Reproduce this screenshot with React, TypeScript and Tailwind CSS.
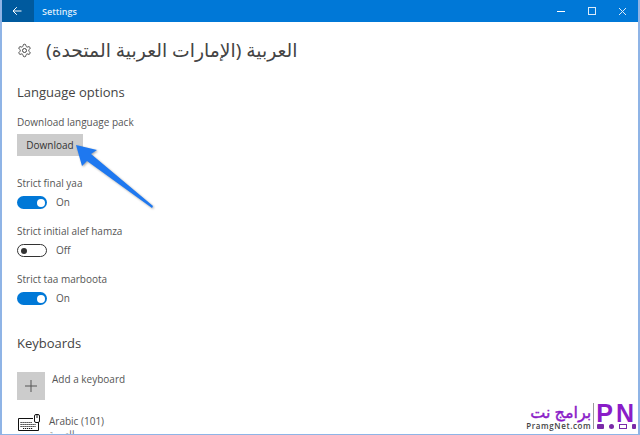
import React from "react";

const font = { fontFamily: '"Open Sans", "Noto Sans", sans-serif' };

function Toggle({ on }: { on: boolean }) {
  return (
    <div className="flex items-center h-[13px] gap-[9px]">
      {on ? (
        <div className="w-[30px] h-[13px] rounded-full bg-[#0078d7] flex items-center justify-end pr-[2px]">
          <div className="w-[8px] h-[8px] rounded-full bg-white" />
        </div>
      ) : (
        <div className="w-[30px] h-[13px] rounded-full border-[1.5px] border-[#333] bg-white flex items-center pl-[3px]">
          <div className="w-[6px] h-[6px] rounded-full bg-[#333]" />
        </div>
      )}
      <span className="text-[10px] leading-[13px] text-[#555]">{on ? "On" : "Off"}</span>
    </div>
  );
}

function Setting({ label, on, className }: { label: string; on: boolean; className: string }) {
  return (
    <div className={className}>
      <div className="text-[10px] leading-[14px] text-[#555] h-[14px]">{label}</div>
      <div className="mt-[6px]">
        <Toggle on={on} />
      </div>
    </div>
  );
}

function Gear() {
  return (
    <svg width="15" height="15" viewBox="0 0 24 24" fill="none" stroke="#444" strokeWidth="1.6" strokeLinejoin="round">
      <path d="M12.2 2h-.4a2 2 0 0 0-2 2v.2a2 2 0 0 1-1 1.7l-.4.3a2 2 0 0 1-2 0l-.2-.1a2 2 0 0 0-2.7.7l-.2.4a2 2 0 0 0 .7 2.7l.2.1a2 2 0 0 1 1 1.7v.5a2 2 0 0 1-1 1.8l-.2.1a2 2 0 0 0-.7 2.7l.2.4a2 2 0 0 0 2.7.7l.2-.1a2 2 0 0 1 2 0l.4.3a2 2 0 0 1 1 1.7v.2a2 2 0 0 0 2 2h.4a2 2 0 0 0 2-2v-.2a2 2 0 0 1 1-1.7l.4-.3a2 2 0 0 1 2 0l.2.1a2 2 0 0 0 2.7-.7l.2-.4a2 2 0 0 0-.7-2.7l-.2-.1a2 2 0 0 1-1-1.8v-.5a2 2 0 0 1 1-1.7l.2-.1a2 2 0 0 0 .7-2.7l-.2-.4a2 2 0 0 0-2.7-.7l-.2.1a2 2 0 0 1-2 0l-.4-.3a2 2 0 0 1-1-1.7V4a2 2 0 0 0-2-2z" />
      <circle cx="12" cy="12" r="3.2" />
    </svg>
  );
}

function KeyboardIcon() {
  return (
    <svg width="23" height="17" viewBox="0 0 23 17" fill="none" stroke="#111" strokeWidth="1">
      <path d="M15 4.5H.5v12h20V8" />
      <rect x="16.5" y="0.5" width="5" height="8" rx="1.5" fill="#fff" />
      <path d="M19 1v3" />
      <path d="M2.5 8.5h12M2.5 10.5h15M2.5 12.5h15M5 14.5h10" strokeDasharray="1.2 0.8" />
    </svg>
  );
}

export default function App() {
  return (
    <div
      style={font}
      className="relative w-[640px] h-[435px] overflow-hidden bg-white border-l-2 border-r-2 border-[#8fb4e6]"
    >
      <div className="flex items-center h-[22px] -mx-[2px] bg-[#0078d7] text-white">
        <div className="w-[34px] h-[22px] bg-[#005a9e] flex items-center justify-center">
          <svg width="10" height="10" viewBox="0 0 10 10" fill="none" stroke="#fff" strokeWidth="1">
            <path d="M9.5 5H1M4.8 1.2 1 5l3.8 3.8" />
          </svg>
        </div>
        <span className="ml-[8px] text-[9px] leading-none font-semibold text-[#dcebf9]">Settings</span>
        <div className="ml-auto flex items-center h-[22px] pr-[2px]">
          <div className="w-[31px] flex justify-center">
            <div className="w-[8px] h-px bg-white" />
          </div>
          <div className="w-[31px] flex justify-center">
            <div className="w-[8px] h-[8px] border border-[#dcebf9]" />
          </div>
          <div className="w-[31px] flex justify-center">
            <svg width="9" height="9" viewBox="0 0 9 9" stroke="#dcebf9" strokeWidth="1">
              <path d="M1 1l7 7M8 1 1 8" />
            </svg>
          </div>
        </div>
      </div>

      <div className="pl-[15px] flex flex-col">
        <div className="flex items-center mt-[20px] h-[17px]">
          <Gear />
          <div
            dir="rtl"
            className="ml-[14px] text-[18.8px] leading-[17px] text-[#444]"
            style={{ fontFamily: '"Noto Sans", "DejaVu Sans", sans-serif' }}
          >
            العربية (الإمارات العربية المتحدة)
          </div>
        </div>

        <div className="mt-[24px] text-[13px] leading-[18px] text-[#444]">Language options</div>
        <div className="mt-[14px] text-[10px] leading-[14px] text-[#555]">Download language pack</div>
        <div className="mt-[5px] w-[66px] h-[22px] bg-[#cccccc] flex items-center justify-center text-[10px] text-[#333]">
          Download
        </div>

        <Setting label="Strict final yaa" on className="mt-[20px]" />
        <Setting label="Strict initial alef hamza" on={false} className="mt-[15px]" />
        <Setting label="Strict taa marboota" on className="mt-[15px]" />

        <div className="mt-[29px] text-[13px] leading-[18px] text-[#444]">Keyboards</div>
        <div className="mt-[20px] flex items-start">
          <div className="w-[28px] h-[28px] bg-[#cccccc] flex items-center justify-center">
            <svg width="12" height="12" viewBox="0 0 12 12" stroke="#555" strokeWidth="1">
              <path d="M6 0v12M0 6h12" />
            </svg>
          </div>
          <span className="ml-[7px] text-[10px] leading-[14px] text-[#555]">Add a keyboard</span>
        </div>
        <div className="mt-[14px] flex items-start">
          <div className="ml-px">
            <KeyboardIcon />
          </div>
          <div className="ml-[8px]">
            <div className="text-[10px] leading-[14px] text-[#555]">Arabic (101)</div>
            <div dir="rtl" className="mt-px text-[9px] leading-[10px] text-[#666] text-left">العربية</div>
          </div>
        </div>
      </div>

      <svg className="absolute left-[-2px] top-0 drop-shadow-[1px_1px_1px_rgba(0,0,0,0.35)]" width="170" height="220" viewBox="0 0 170 220">
        <path d="M76 145 97 150 91 154 153 206 152 208 87 161 82 166Z" fill="#1e78f0" />
      </svg>

      <div className="absolute right-[1px] bottom-[5px] flex items-center gap-[2px] bg-white pl-[2px]">
        <div className="flex flex-col items-end">
          <div
            dir="rtl"
            className="text-[16px] leading-[20px] text-[#8a1cc8] [-webkit-text-stroke:0.4px_#8a1cc8]"
            style={{ fontFamily: '"Noto Sans", "DejaVu Sans", sans-serif' }}
          >
            برامج نت
          </div>
          <div className="text-[8px] leading-[8px] tracking-[0.6px] font-semibold text-[#444]">PramgNet.com</div>
        </div>
        <div className="w-px h-[26px] bg-[#999]" />
        <div className="flex flex-col items-center">
          <div
            className="flex text-[25px] leading-[19px] font-bold tracking-[3px] text-[#8a1cc8]"
            style={{ fontFamily: '"Liberation Sans", sans-serif' }}
          >
            <span>P</span>
            <span>N</span>
          </div>
          <div className="mt-[1px] flex gap-[5px]">
            <div className="w-[7px] h-[5px] bg-[#7a2aa8] rounded-[1px]" />
            <div className="w-[5px] h-[5px] bg-[#7a2aa8] rounded-full" />
            <div className="w-[8px] h-[5px] border border-[#7a2aa8]" />
            <div className="w-[4px] h-[5px] bg-[#7a2aa8] rounded-[1px]" />
          </div>
        </div>
      </div>

      <div className="absolute left-[-2px] right-[-2px] bottom-0 h-px bg-[#8fb4e6]" />
    </div>
  );
}
